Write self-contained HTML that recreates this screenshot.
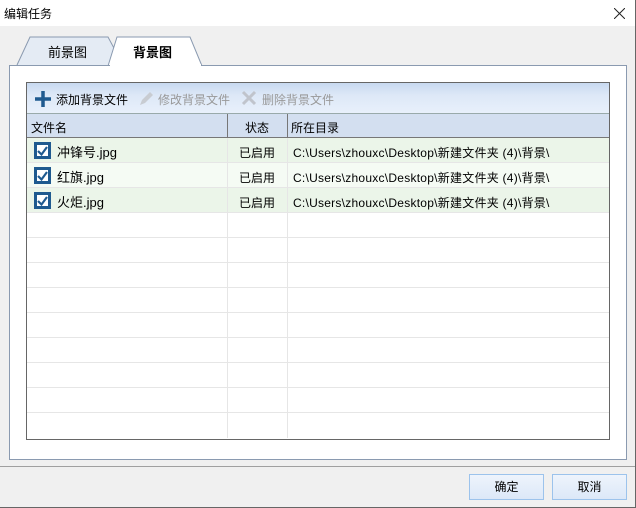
<!DOCTYPE html><html><head><meta charset="utf-8"><style>
*{margin:0;padding:0;box-sizing:border-box}
body{width:636px;height:508px;background:#f0f0f0;font-family:"Liberation Sans","Noto Sans CJK SC",sans-serif;font-size:12px;color:#000;position:relative;overflow:hidden;border-right:1px solid #666;border-bottom:1px solid #666}
.abs{position:absolute}
.title{left:0;top:0;width:635px;height:26px;background:#fff}
.panel{left:9px;top:65px;width:618px;height:395px;background:#fff;border:1px solid #8a9ab0}
.grid{left:26px;top:82px;width:584px;height:358px;border:1px solid #666;background:#fff;overflow:hidden}
.tb{left:0;top:0;width:582px;height:31px;background:linear-gradient(#c8d9f0,#dde8f7 40%,#e8f0fb);border-bottom:1px solid #9aa}
.hd{left:0;top:31px;width:582px;height:24px;background:#d3dff0;border-bottom:1px solid #777}
.row{left:0;width:582px;height:25px;border-bottom:1px solid #e6e6e6}
.vl{top:31px;width:1px;height:330px;background:#e6e6e6}
.cb{left:7px;width:17px;height:17px;background:#1f5a8f;}
.cb::after{content:"";position:absolute;left:3px;top:3px;width:11px;height:11px;background:#fff}
.btn{width:75px;height:26px;border:1px solid #9cc3ec;background:linear-gradient(#eef4fc,#dce8f8);text-align:center;line-height:24px;font-size:12px}
.p{left:266px;letter-spacing:0.25px}
</style></head><body>
<div class="abs title"></div>
<div class="abs" style="left:4px;top:5px;font-size:12px">编辑任务</div>
<svg class="abs" style="left:614px;top:8px" width="11" height="11"><path d="M0 0L11 11M11 0L0 11" stroke="#222" stroke-width="1"/></svg>
<svg class="abs" style="left:0;top:30px" width="220" height="40"><path d="M17 35 L30 7 L108 7 L115 20 L110 35" fill="#e4ebf4" stroke="#8a9ab0"/><path d="M108 36 L117 7 L190 7 L202 36" fill="#fff" stroke="#8a9ab0"/><rect x="109" y="35" width="92" height="3" fill="#fff"/></svg>
<div class="abs" style="left:48px;top:42px;font-size:13px">前景图</div>
<div class="abs" style="left:133px;top:42px;font-size:13px;font-weight:bold">背景图</div>
<div class="abs panel"></div>
<div class="abs" style="left:110px;top:64px;width:91px;height:3px;background:#fff"></div>
<div class="abs grid">
<div class="abs tb"></div>
<svg class="abs" style="left:7px;top:7px" width="18" height="18"><path d="M9 1V17M1 9H17" stroke="#1f5a8f" stroke-width="3.5"/></svg>
<div class="abs" style="left:29px;top:8px">添加背景文件</div>
<svg class="abs" style="left:110px;top:6px" width="18" height="18"><path d="M3 16L5 11L13 3L16 6L8 14Z" fill="#c8ccd2"/></svg>
<div class="abs" style="left:131px;top:8px;color:#999">修改背景文件</div>
<svg class="abs" style="left:214px;top:7px" width="16" height="16"><path d="M2 2L14 14M14 2L2 14" stroke="#c0c4cc" stroke-width="3"/></svg>
<div class="abs" style="left:235px;top:8px;color:#999">删除背景文件</div>
<div class="abs hd"></div>
<div class="abs" style="left:200px;top:31px;width:1px;height:24px;background:#777"></div>
<div class="abs" style="left:260px;top:31px;width:1px;height:24px;background:#777"></div>
<div class="abs" style="left:4px;top:36px">文件名</div>
<div class="abs" style="left:218px;top:36px">状态</div>
<div class="abs" style="left:264px;top:36px">所在目录</div>
<div class="abs row" style="top:55px;background:#ebf5e9"></div>
<div class="abs row" style="top:80px;background:#f5fbf4"></div>
<div class="abs row" style="top:105px;background:#ebf5e9"></div>
<div class="abs row" style="top:130px"></div><div class="abs row" style="top:155px"></div><div class="abs row" style="top:180px"></div><div class="abs row" style="top:205px"></div><div class="abs row" style="top:230px"></div><div class="abs row" style="top:255px"></div><div class="abs row" style="top:280px"></div><div class="abs row" style="top:305px"></div>
<div class="abs vl" style="left:200px;top:55px;height:300px"></div><div class="abs vl" style="left:260px;top:55px;height:300px"></div>
<div class="abs cb" style="top:59px"></div><div class="abs cb" style="top:84px"></div><div class="abs cb" style="top:109px"></div>
<svg class="abs" style="left:7px;top:59px" width="17" height="70"><g fill="none" stroke="#1f5a8f" stroke-width="2.2"><path d="M4 9L7.5 12.5L13 5"/><path d="M4 34L7.5 37.5L13 30"/><path d="M4 59L7.5 62.5L13 55"/></g></svg>
<div class="abs" style="left:30px;top:59px;font-size:13px">冲锋号.jpg</div>
<div class="abs" style="left:30px;top:84px;font-size:13px">红旗.jpg</div>
<div class="abs" style="left:30px;top:109px;font-size:13px">火炬.jpg</div>
<div class="abs" style="left:212px;top:61px">已启用</div><div class="abs" style="left:212px;top:86px">已启用</div><div class="abs" style="left:212px;top:111px">已启用</div>
<div class="abs p" style="top:61px">C:\Users\zhouxc\Desktop\新建文件夹 (4)\背景\</div>
<div class="abs p" style="top:86px">C:\Users\zhouxc\Desktop\新建文件夹 (4)\背景\</div>
<div class="abs p" style="top:111px">C:\Users\zhouxc\Desktop\新建文件夹 (4)\背景\</div>
</div>
<div class="abs" style="left:0;top:466px;width:635px;height:1px;background:#a0a0a0"></div>
<div class="abs btn" style="left:469px;top:474px">确定</div>
<div class="abs btn" style="left:552px;top:474px">取消</div>
</body></html>
